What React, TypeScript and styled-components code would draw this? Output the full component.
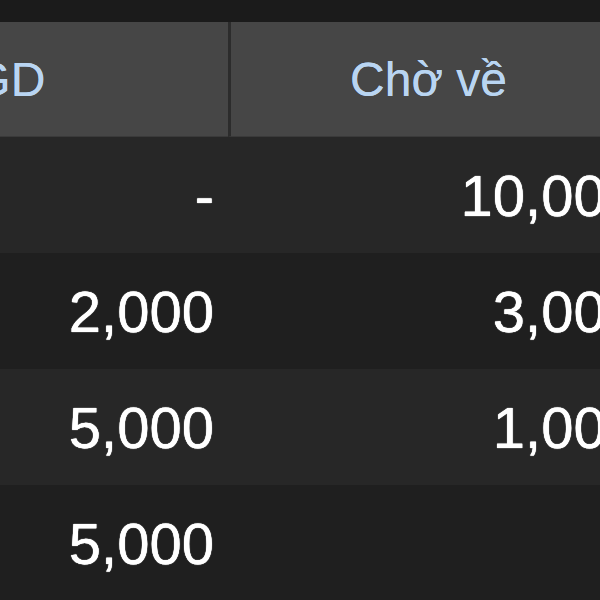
import React from "react";
import styled, { createGlobalStyle } from "styled-components";

const Global = createGlobalStyle`
  html, body { margin: 0; padding: 0; background: #1b1b1b; overflow: hidden; }
  body { font-family: "Liberation Sans", Arial, sans-serif; }
`;

const Page = styled.div`
  width: 600px;
  height: 600px;
  overflow: hidden;
  background: #1b1b1b;
  padding-top: 22px;
  box-sizing: border-box;
`;

const Table = styled.div`
  margin-left: -338px;
  width: 1000px;
  display: grid;
  grid-template-columns: 566px 424px;
`;

const HeadCell = styled.div<{ $divider?: boolean }>`
  height: 115px;
  background: #464646;
  color: #b9d5f2;
  font-size: 48px;
  display: flex;
  align-items: center;
  justify-content: center;
  padding-right: 26px;
  box-sizing: border-box;
  border-left: ${(p) => (p.$divider ? "3px solid #2c2c2c" : "none")};
  border-bottom: 1px solid #3a3a3a;
  text-shadow: 0 0 0.6px #b9d5f2;
`;

const Cell = styled.div<{ $alt: boolean }>`
  height: 116px;
  background: ${(p) => (p.$alt ? "#1f1f1f" : "#272727")};
  color: #ffffff;
  font-size: 58px;
  display: flex;
  align-items: center;
  justify-content: flex-end;
  padding-right: 14px;
  box-sizing: border-box;
  text-shadow: 0 0 0.8px #ffffff, 0 0 0.8px #ffffff;
`;

const rows = [
  ["-", "10,000"],
  ["2,000", "3,000"],
  ["5,000", "1,000"],
  ["5,000", ""],
];

export default function App() {
  return (
    <>
      <Global />
      <Page>
        <Table>
          <HeadCell>Có thể GD</HeadCell>
          <HeadCell $divider>Chờ về</HeadCell>
          {rows.map((r, i) =>
            r.map((v, j) => (
              <Cell key={`${i}-${j}`} $alt={i % 2 === 1}>
                {v}
              </Cell>
            ))
          )}
        </Table>
      </Page>
    </>
  );
}
